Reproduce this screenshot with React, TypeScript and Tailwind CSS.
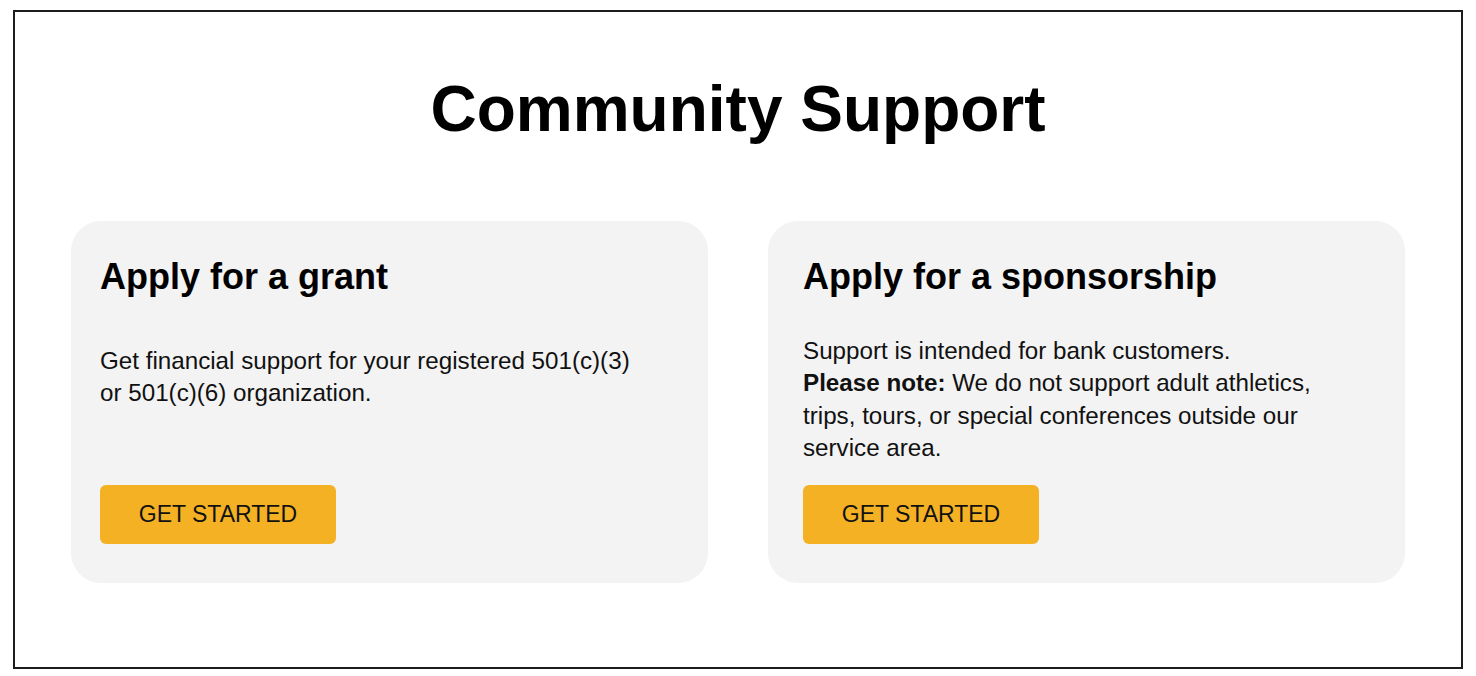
export default function App() {
  return (
    <div className="px-[13px] pt-[10px] font-['Liberation_Sans',Arial,sans-serif] text-black">
      <section className="border-2 border-[#1c1c1c] px-[56px] pb-[84px] pt-[60px]">
        <h1 className="text-center text-[64px] font-bold leading-[74px]">Community Support</h1>
        <div className="mt-[75px] grid grid-cols-2 gap-[60px]">
          <div className="flex h-[362px] flex-col rounded-[30px] bg-[#f3f3f3] px-[29px] pb-[39px] pt-[35px]">
            <h2 className="text-[36px] font-bold leading-[41px]">Apply for a grant</h2>
            <p className="mt-[48px] max-w-[548px] text-[24.2px] leading-[32.4px] text-[#111]">
              Get financial support for your registered 501(c)(3) or 501(c)(6) organization.
            </p>
            <button
              type="button"
              className="mt-auto flex h-[59px] w-[236px] items-center justify-center rounded-[6px] bg-[#f4b124] text-[23px] text-[#111]"
            >
              GET STARTED
            </button>
          </div>
          <div className="flex h-[362px] flex-col rounded-[30px] bg-[#f3f3f3] px-[35px] pb-[39px] pt-[35px]">
            <h2 className="text-[36px] font-bold leading-[41px]">Apply for a sponsorship</h2>
            <p className="mt-[38px] max-w-[548px] text-[24.2px] leading-[32.4px] text-[#111]">
              Support is intended for bank customers.
              <br />
              <strong>Please note:</strong> We do not support adult athletics, trips, tours, or special
              conferences outside our service area.
            </p>
            <button
              type="button"
              className="mt-auto flex h-[59px] w-[236px] items-center justify-center rounded-[6px] bg-[#f4b124] text-[23px] text-[#111]"
            >
              GET STARTED
            </button>
          </div>
        </div>
      </section>
    </div>
  );
}
